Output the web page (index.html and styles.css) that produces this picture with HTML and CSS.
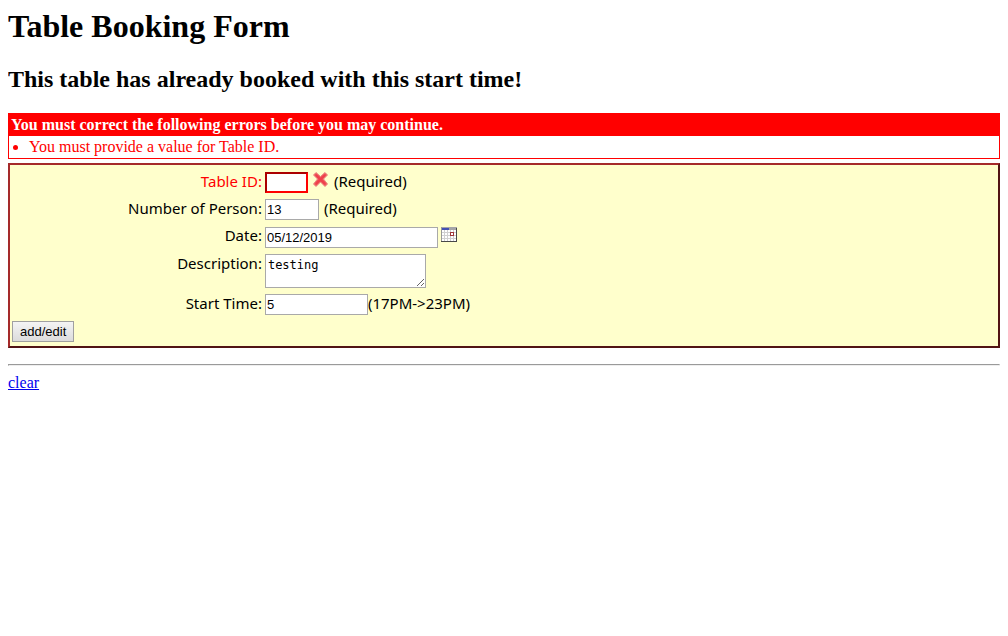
FILE: index.html
```html
<!DOCTYPE html>
<html lang="en">
<head>
<meta charset="utf-8">
<title>Table Booking Form</title>
<link rel="stylesheet" href="styles.css">
</head>
<body>
<h1 class="title">Table Booking Form</h1>
<h2 class="notice">This table has already booked with this start time!</h2>
<section class="errors">
  <div class="errors-head">You must correct the following errors before you may continue.</div>
  <ul class="errors-list"><li>You must provide a value for Table ID.</li></ul>
</section>
<form class="booking">
  <div class="row">
    <label class="label invalid" for="table-id">Table ID:</label>
    <div class="field">
      <input class="box box-id" id="table-id" type="text">
      <svg class="cross" width="16" height="16" viewBox="0 0 16 16" aria-hidden="true">
        <path d="M0.500 3 3 0.500 7.500 4.500 12 0.500 14.500 3 10.500 7 14.500 12 12 14.500 7.500 10 3 14.500 0.500 12 4.500 7Z" fill="#f3525a" stroke="#e88c80"/>
        <path d="M3 3 12 12M12 3 3 12" stroke="#ee414b" stroke-width="2"/>
      </svg>
      <span>(Required)</span>
    </div>
  </div>
  <div class="row">
    <label class="label" for="persons">Number of Person:</label>
    <div class="field">
      <input class="box box-persons" id="persons" type="text" value="13">
      <span>(Required)</span>
    </div>
  </div>
  <div class="row">
    <label class="label" for="date">Date:</label>
    <div class="field field-date">
      <input class="box box-date" id="date" type="text" value="05/12/2019">
      <button class="calendar" type="button" aria-label="Pick a date">
        <svg width="16" height="15" viewBox="0 0 16 15" shape-rendering="crispEdges">
          <path d="M0 0H16V15H0Z" fill="#d0d0d0"/>
          <path d="M1 3H3V5H1ZM4 3H6V5H4ZM7 3H9V5H7ZM10 3H12V5H10ZM13 3H15V5H13ZM1 6H3V8H1ZM4 6H6V8H4ZM7 6H9V8H7ZM13 6H15V8H13ZM1 9H3V11H1ZM4 9H6V11H4ZM7 9H9V11H7ZM10 9H12V11H10ZM13 9H15V11H13ZM1 12H3V14H1ZM4 12H6V14H4ZM7 12H9V14H7ZM10 12H12V14H10ZM13 12H15V14H13Z" fill="#fff"/>
          <path d="M0 0H16V3H0Z" fill="#a5a5a8"/>
          <path d="M1 1H8V3H1Z" fill="#4450b4"/>
          <path d="M0 0H1V15H0Z" fill="#999"/>
          <path d="M15 1H16V15H0V14H15Z" fill="#484848"/>
          <path d="M9 5H13V9H9Z" fill="#a03838"/>
          <path d="M10 6H12V8H10Z" fill="#fff"/>
        </svg>
      </button>
    </div>
  </div>
  <div class="row">
    <label class="label" for="description">Description:</label>
    <div class="field"><textarea class="box box-description" id="description">testing</textarea></div>
  </div>
  <div class="row">
    <label class="label" for="start">Start Time:</label>
    <div class="field field-tight">
      <input class="box box-start" id="start" type="text" value="5">
      <span>(17PM-&gt;23PM)</span>
    </div>
  </div>
  <div><button class="submit" type="button">add/edit</button></div>
</form>
<hr class="rule">
<a class="clear" href="#">clear</a>
</body>
</html>
```

FILE: styles.css
```css
body {
  margin: 8px;
  background: #fff;
  color: #000;
  font: 16px/18px "Liberation Serif", serif;
}
.title {
  margin: 0;
  font-size: 32px;
  line-height: 37px;
}
.notice {
  margin: 21px 0 20px;
  font-size: 24px;
  line-height: 27px;
}
.errors {
  margin-bottom: 4px;
  border: 1px solid #f00;
  color: #f00;
}
.errors-head {
  padding: 2px;
  background: #f00;
  color: #fff;
  font-weight: bold;
}
.errors-list {
  margin: 0;
  padding: 2px 2px 2px 20px;
}
.booking {
  display: flex;
  flex-direction: column;
  gap: 6px;
  padding: 7px 2px 4px;
  border: 2px outset brown;
  background: #ffc;
  font: 15px/18px "Noto Sans", sans-serif;
}
.row {
  display: grid;
  grid-template-columns: 25.4% 1fr;
  column-gap: 3px;
}
.label {
  text-align: right;
}
.invalid {
  color: #f00;
}
.field {
  display: flex;
  gap: 5px;
  align-items: flex-start;
}
.field-date {
  padding-top: 1px;
}
.field-tight {
  gap: 0;
}
.box {
  box-sizing: border-box;
  height: 21px;
  margin: 0;
  padding: 1px;
  border: 1px solid #a9a9a9;
  background: #fff;
  color: #000;
  font: 13px "Liberation Sans", Arial, sans-serif;
}
.box-id {
  width: 43px;
  border: 2px inset #f00;
}
.box-persons {
  width: 54px;
}
.box-date {
  width: 173px;
}
.box-description {
  width: 161px;
  height: 34px;
  padding: 2px;
  font: 12px/16px "DejaVu Sans Mono", monospace;
}
.box-start {
  width: 103px;
}
.cross {
  flex: none;
}
.calendar {
  display: block;
  margin: 0 0 0 -2px;
  padding: 0;
  border: 0;
  background: none;
}
.calendar svg {
  display: block;
}
.submit {
  display: block;
  height: 21px;
  margin: 0;
  padding: 0 7px;
  border: 1px solid #a0a0a0;
  background: linear-gradient(#f4f4f4, #dcdcdc);
  color: #000;
  font: 13px "Liberation Sans", Arial, sans-serif;
}
.rule {
  margin: 16px 0 8px;
}
.clear {
  color: #00e;
}
```
